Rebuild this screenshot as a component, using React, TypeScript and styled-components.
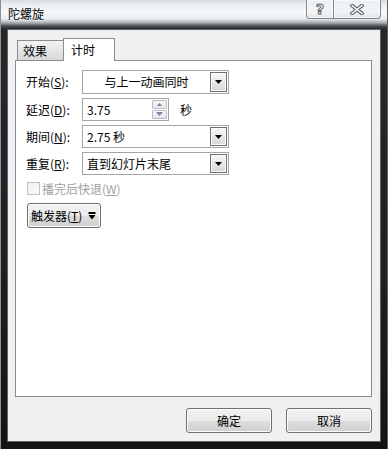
import React from "react";
import styled, { createGlobalStyle } from "styled-components";

const GlobalStyle = createGlobalStyle`
  html, body {
    margin: 0;
    padding: 0;
    background: #1e2022;
  }
  body {
    font-family: "Noto Sans CJK SC", "Noto Sans", sans-serif;
    font-size: 12px;
    color: #000;
  }
`

const Window = styled.div`
  width: 388px;
  height: 449px;
  box-sizing: border-box;
  display: flex;
  flex-direction: column;
  overflow: hidden;
  background: linear-gradient(to bottom, #d6dde3 0px, #eaeff3 5px, #f7f9fb 13px, #e6ebef 19px, #a2a7ac 23px, #4c5054 26px, #26292b 29px, #1d1f21 60%, #131415 100%);
  box-shadow: inset 1px 0 0 #8c9196, inset -1px 0 0 #5c6065;
`

const TitleBar = styled.div`
  height: 29px;
  flex: none;
  display: flex;
  align-items: flex-start;
  justify-content: space-between;
`

const Title = styled.div`
  padding: 6px 0 0 8px;
  font-size: 12px;
  line-height: 16px;
  text-shadow: 0 0 5px #fff, 0 0 2px #fff;
`

const Caption = styled.div`
  display: flex;
  margin-right: 7px;
`

const CaptionButton = styled.div<{ $w: number }>`
  width: ${p => p.$w}px;
  height: 19px;
  box-sizing: border-box;
  border: 1px solid #80868c;
  border-top: none;
  display: flex;
  align-items: center;
  justify-content: center;
  background: linear-gradient(to bottom, rgba(255, 255, 255, 0.55), rgba(240, 244, 247, 0.35) 50%, rgba(215, 222, 228, 0.5));
  box-shadow: inset 0 0 0 1px rgba(255, 255, 255, 0.6);
  &:first-child {
    border-bottom-left-radius: 4px;
  }
  &:last-child {
    border-left: none;
    border-bottom-right-radius: 4px;
  }
`

const HelpGlyph = styled.span`
  font-family: "DejaVu Sans", sans-serif;
  font-weight: bold;
  font-size: 14px;
  line-height: 14px;
  color: #fff;
  -webkit-text-stroke: 1px #5e6266;
`

const Client = styled.div`
  flex: 1;
  margin: 0 7px 7px 7px;
  border: 1px solid #5f6367;
  background: #f0f0f0;
  display: flex;
  flex-direction: column;
  padding: 8px 8px 8px 7px;
  min-height: 0;
`

const TabStrip = styled.div`
  height: 22px;
  flex: none;
  display: flex;
  align-items: flex-end;
  padding-left: 2px;
  position: relative;
  z-index: 1;
`

const Tab = styled.div<{ $active?: boolean }>`
  box-sizing: border-box;
  border: 1px solid #898c95;
  border-bottom: none;
  line-height: 18px;
  ${p => p.$active ? `
    width: 52px;
    height: 23px;
    margin-left: -1px;
    margin-bottom: -1px;
    padding: 2px 0 0 7px;
    background: #fff;
  ` : `
    width: 47px;
    height: 20px;
    padding: 1px 0 0 5px;
    background: linear-gradient(to bottom, #f3f3f3, #e6e6e6 50%, #d8d8d8);
  `}
`

const Panel = styled.div`
  flex: 1;
  border: 1px solid #898c95;
  background: #fff;
  padding: 9px 10px;
  display: flex;
  flex-direction: column;
  gap: 4px;
`

const FormRow = styled.div<{ $h?: number }>`
  display: flex;
  align-items: center;
  height: ${p => p.$h ?? 23}px;
`

const Label = styled.div`
  width: 56px;
  flex: none;
  line-height: 16px;
  white-space: nowrap;
`

const Key = styled.span`
  text-decoration: underline;
  text-underline-offset: 1px;
`

const Select = styled.div`
  width: 147px;
  height: 100%;
  box-sizing: border-box;
  border: 1px solid #a5a5a5;
  display: flex;
  align-items: center;
  background: #fff;
`

const SelectText = styled.div<{ $center?: boolean }>`
  flex: 1;
  padding-left: ${p => p.$center ? 0 : 4}px;
  text-align: ${p => p.$center ? "center" : "left"};
  line-height: 16px;
  white-space: nowrap;
`

const DropButton = styled.div`
  width: 17px;
  height: calc(100% - 2px);
  margin-right: 1px;
  box-sizing: border-box;
  border: 1px solid #6f6f6f;
  background: linear-gradient(to bottom, #f7f7f7, #e8e8e8 50%, #d6d6d6);
  box-shadow: inset 0 0 0 1px #fbfbfb;
  display: flex;
  align-items: center;
  justify-content: center;
`

const NumberBox = styled.div`
  width: 87px;
  height: 100%;
  box-sizing: border-box;
  border: 1px solid #a5a5a5;
  display: flex;
  align-items: center;
  background: #fff;
`

const Spinner = styled.div`
  width: 15px;
  height: 19px;
  margin: 0 1px 1px 0;
  display: flex;
  flex-direction: column;
  gap: 1px;
`

const SpinButton = styled.div`
  flex: 1;
  box-sizing: border-box;
  border: 1px solid #b9bec6;
  border-radius: 1px;
  background: linear-gradient(to bottom, #f8f8f8, #e6e6e6);
  display: flex;
  align-items: center;
  justify-content: center;
`

const Unit = styled.div`
  margin-left: 11px;
  line-height: 16px;
`

const CheckRow = styled.div`
  display: flex;
  align-items: center;
  height: 13px;
  margin: 3px 0 0 1px;
  color: #a0a0a0;
  line-height: 16px;
`

const CheckBox = styled.div`
  width: 13px;
  height: 13px;
  box-sizing: border-box;
  border: 1px solid #c2c2c2;
  background: linear-gradient(to bottom right, #efefef, #fafafa);
  margin-right: 2px;
`

const PushButton = styled.div<{ $w: number }>`
  width: ${p => p.$w}px;
  height: 25px;
  box-sizing: border-box;
  border: 1px solid #707070;
  border-radius: 3px;
  background: linear-gradient(to bottom, #f2f2f2 0%, #ebebeb 50%, #dddddd 51%, #cfcfcf 100%);
  box-shadow: inset 0 0 0 1px #fcfcfc;
  display: flex;
  align-items: center;
  justify-content: center;
  line-height: 16px;
  white-space: nowrap;
`

const TriggerButton = styled(PushButton)`
  justify-content: flex-start;
  padding-left: 3px;
  margin: 4px 0 0 1px;
  gap: 6px;
`

const ButtonRow = styled.div`
  flex: none;
  display: flex;
  justify-content: flex-end;
  gap: 14px;
  margin-top: 11px;
`

const Down = ({ color = "#000" }: { color?: string }) => (
  <svg width="7" height="4" viewBox="0 0 7 4">
    <polygon points="0,0 7,0 3.5,4" fill={color} />
  </svg>
)

const Up = ({ color = "#000" }: { color?: string }) => (
  <svg width="5" height="3" viewBox="0 0 5 3">
    <polygon points="0,3 5,3 2.5,0" fill={color} />
  </svg>
)

const DropBarIcon = () => (
  <svg width="8" height="8" viewBox="0 0 8 8">
    <rect x="0.5" y="0" width="7" height="2" fill="#000" />
    <polygon points="0.5,3 7.5,3 4,7.5" fill="#000" />
  </svg>
)

const CloseIcon = () => (
  <svg width="14" height="11" viewBox="0 0 14 11">
    <path d="M2 1.5 L12 9.5 M12 1.5 L2 9.5" stroke="#5f6468" strokeWidth="3.6" strokeLinecap="square" />
    <path d="M2 1.5 L12 9.5 M12 1.5 L2 9.5" stroke="#fff" strokeWidth="1.6" strokeLinecap="square" />
  </svg>
)

export default function App() {
  return (
    <>
      <GlobalStyle />
      <Window>
        <TitleBar>
          <Title>陀螺旋</Title>
          <Caption>
            <CaptionButton $w={28}>
              <HelpGlyph>?</HelpGlyph>
            </CaptionButton>
            <CaptionButton $w={47}>
              <CloseIcon />
            </CaptionButton>
          </Caption>
        </TitleBar>
        <Client>
          <TabStrip>
            <Tab>效果</Tab>
            <Tab $active>计时</Tab>
          </TabStrip>
          <Panel>
            <FormRow $h={24}>
              <Label>开始(<Key>S</Key>):</Label>
              <Select>
                <SelectText $center>与上一动画同时</SelectText>
                <DropButton><Down /></DropButton>
              </Select>
            </FormRow>
            <FormRow>
              <Label>延迟(<Key>D</Key>):</Label>
              <NumberBox>
                <SelectText>3.75</SelectText>
                <Spinner>
                  <SpinButton><Up color="#7683a6" /></SpinButton>
                  <SpinButton><Down color="#7683a6" /></SpinButton>
                </Spinner>
              </NumberBox>
              <Unit>秒</Unit>
            </FormRow>
            <FormRow>
              <Label>期间(<Key>N</Key>):</Label>
              <Select>
                <SelectText>2.75 秒</SelectText>
                <DropButton><Down /></DropButton>
              </Select>
            </FormRow>
            <FormRow>
              <Label>重复(<Key>R</Key>):</Label>
              <Select>
                <SelectText>直到幻灯片末尾</SelectText>
                <DropButton><Down /></DropButton>
              </Select>
            </FormRow>
            <CheckRow>
              <CheckBox />
              播完后快退(<Key>W</Key>)
            </CheckRow>
            <TriggerButton $w={74}>
              <span>触发器(<Key>T</Key>)</span>
              <DropBarIcon />
            </TriggerButton>
          </Panel>
          <ButtonRow>
            <PushButton $w={86}>确定</PushButton>
            <PushButton $w={86}>取消</PushButton>
          </ButtonRow>
        </Client>
      </Window>
    </>
  );
}
